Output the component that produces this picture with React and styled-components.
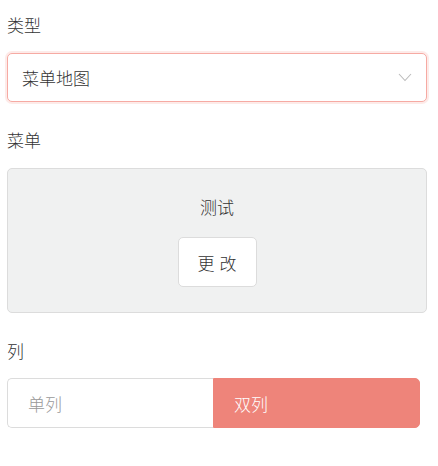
import React, { useState } from "react"
import styled, { createGlobalStyle } from "styled-components"

const GlobalStyle = createGlobalStyle`
  body {
    margin: 0;
    background: #fff;
    font-family: "Liberation Sans", "Noto Sans CJK SC", sans-serif;
    font-weight: 300;
    color: #333;
  }
`

const Form = styled.div`
  padding: 15px 11px 0 7px;
  width: 438px;
  box-sizing: border-box;
`

const Field = styled.div`
  margin-bottom: 28px;
`

const Label = styled.div`
  font-size: 17px;
  line-height: 24px;
  color: #333;
  margin: 0 0 ${p => p.$gap || 14}px 0;
`

const Select = styled.div`
  display: flex;
  align-items: center;
  justify-content: space-between;
  height: 49px;
  width: 420px;
  box-sizing: border-box;
  padding: 0 14px 0 14px;
  border: 1px solid #f6aaa3;
  border-radius: 5px;
  box-shadow: 0 0 0 2px rgba(240, 131, 121, 0.16);
  background: #fff;
  font-size: 17px;
  color: #333;
`

const Panel = styled.div`
  width: 420px;
  height: 145px;
  box-sizing: border-box;
  border: 1px solid #dcdcdc;
  border-radius: 5px;
  background: #f0f1f1;
  display: flex;
  flex-direction: column;
  align-items: center;
  padding-top: 28px;
`

const PanelTitle = styled.div`
  font-size: 17px;
  line-height: 24px;
  color: #333;
  margin-bottom: 16px;
`

const Button = styled.button`
  width: 79px;
  height: 50px;
  border: 1px solid #dcdcdc;
  border-radius: 5px;
  background: #fff;
  font-family: inherit;
  font-weight: 300;
  font-size: 17px;
  color: #333;
  letter-spacing: 5px;
  padding: 0 0 0 5px;
`

const Segmented = styled.div`
  display: flex;
  width: 413px;
  height: 50px;
`

const Segment = styled.div`
  flex: 1;
  display: flex;
  align-items: center;
  box-sizing: border-box;
  padding-left: 20px;
  font-size: 17px;
  color: ${p => (p.$active ? "#fff" : "#999")};
  background: ${p => (p.$active ? "#ee847a" : "#fff")};
  border: 1px solid ${p => (p.$active ? "#ee847a" : "#dcdcdc")};
  border-radius: ${p => (p.$first ? "5px 0 0 5px" : "0 5px 5px 0")};
  ${p => p.$first && "border-right: none;"}
`

const Chevron = () => (
  <svg width="14" height="9" viewBox="0 0 14 9">
    <path d="M1 1l6 6.5L13 1" fill="none" stroke="#bbb" strokeWidth="1.1" />
  </svg>
)

export default function App() {
  const [cols, setCols] = useState(2)
  return (
    <>
      <GlobalStyle />
      <Form>
        <Field>
          <Label>类型</Label>
          <Select>
            <span>菜单地图</span>
            <Chevron />
          </Select>
        </Field>
        <Field>
          <Label>菜单</Label>
          <Panel>
            <PanelTitle>测试</PanelTitle>
            <Button>更改</Button>
          </Panel>
        </Field>
        <Field>
          <Label $gap={13}>列</Label>
          <Segmented>
            <Segment $first $active={cols === 1} onClick={() => setCols(1)}>
              单列
            </Segment>
            <Segment $active={cols === 2} onClick={() => setCols(2)}>
              双列
            </Segment>
          </Segmented>
        </Field>
      </Form>
    </>
  )
}
